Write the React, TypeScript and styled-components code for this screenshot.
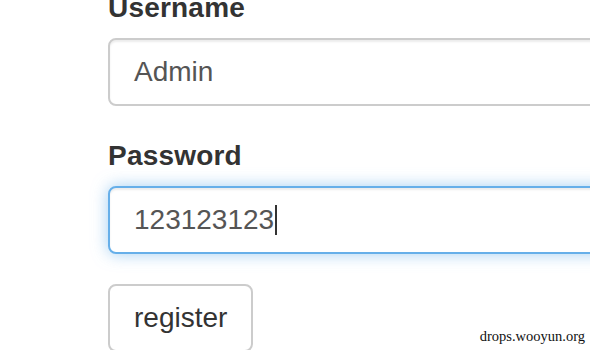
import React from "react";
import styled, { createGlobalStyle } from "styled-components";

const Global = createGlobalStyle`
  html, body { margin: 0; padding: 0; background: #fff; overflow: hidden; }
  body { width: 590px; height: 350px; font-family: "Liberation Sans", Arial, sans-serif; }
`;

const Page = styled.div`
  position: relative;
  width: 590px;
  height: 350px;
  overflow: hidden;
`;

const Form = styled.form`
  margin-top: -12px;
  padding-left: 108px;
  width: 640px;
`;

const Group = styled.div`
  margin-bottom: 30px;
`;

const Label = styled.label`
  display: block;
  font-weight: bold;
  font-size: 28px;
  line-height: 40px;
  letter-spacing: 0.2px;
  color: #333;
  margin-bottom: 10px;
`;

const Field = styled.div<{ $focus?: boolean }>`
  box-sizing: border-box;
  height: 68px;
  width: 600px;
  padding: 12px 24px;
  font-size: 28px;
  line-height: 40px;
  color: #555;
  background: #fff;
  border: 2px solid ${(p) => (p.$focus ? "#66afe9" : "#ccc")};
  border-radius: 8px;
  box-shadow: ${(p) =>
    p.$focus
      ? "inset 0 2px 2px rgba(0,0,0,.075), 0 0 16px rgba(102,175,233,.6)"
      : "inset 0 2px 2px rgba(0,0,0,.075)"};
  display: flex;
  align-items: center;
`;

const Caret = styled.span`
  display: inline-block;
  width: 2px;
  height: 30px;
  background: #333;
  margin-left: 1px;
`;

const Button = styled.button`
  box-sizing: border-box;
  height: 68px;
  padding: 12px 24px;
  font-family: "Liberation Sans", Arial, sans-serif;
  font-size: 28px;
  line-height: 40px;
  color: #333;
  background: #fff;
  border: 2px solid #ccc;
  border-radius: 8px;
`;

const Watermark = styled.div`
  position: absolute;
  right: 4px;
  bottom: 5px;
  font-family: "Liberation Serif", "Times New Roman", serif;
  font-size: 14.5px;
  color: #111;
  background: #fff;
  padding: 0 1px;
`;

export default function App() {
  return (
    <Page>
      <Global />
      <Form onSubmit={(e) => e.preventDefault()}>
        <Group>
          <Label>Username</Label>
          <Field>Admin</Field>
        </Group>
        <Group>
          <Label>Password</Label>
          <Field $focus>
            123123123
            <Caret />
          </Field>
        </Group>
        <Button type="button">register</Button>
      </Form>
      <Watermark>drops.wooyun.org</Watermark>
    </Page>
  );
}
